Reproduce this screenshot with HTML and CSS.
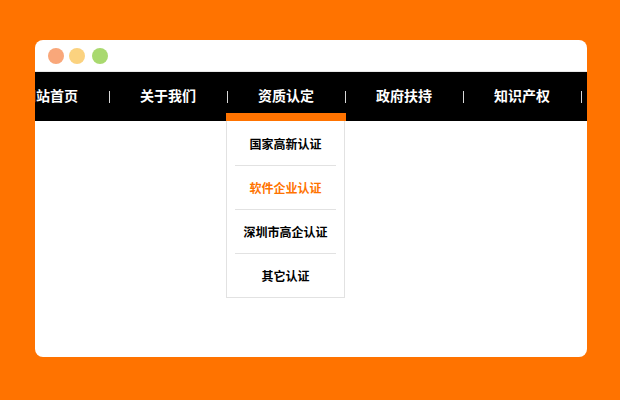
FILE: index.html
```html
<!DOCTYPE html>
<html lang="zh-CN">
<head>
  <meta charset="UTF-8" />
  <meta name="viewport" content="width=device-width, initial-scale=1.0"/>
  <title>导航菜单</title>
  <link rel="stylesheet" href="styles.css">
</head>
<body>
  <div class="window">
    <div class="titlebar">
      <span class="dot dot-red"></span>
      <span class="dot dot-yellow"></span>
      <span class="dot dot-green"></span>
    </div>

    <ul class="nav">
      <li class="nav-item"><a href="#">网站首页</a></li>
      <li class="nav-item"><a href="#">关于我们</a></li>
      <li class="nav-item active">
        <a href="#">资质认定</a>
        <ul class="submenu">
          <li><a href="#">国家高新认证</a></li>
          <li class="current"><a href="#">软件企业认证</a></li>
          <li><a href="#">深圳市高企认证</a></li>
          <li><a href="#">其它认证</a></li>
        </ul>
      </li>
      <li class="nav-item"><a href="#">政府扶持</a></li>
      <li class="nav-item"><a href="#">知识产权</a></li>
    </ul>
  </div>
</body>
</html>
```

FILE: styles.css
```css
* {
  box-sizing: border-box;
}

body {
  margin: 0;
  height: 400px;
  padding: 40px 33px 43px 35px;
  background-color: #ff7300;
  font-family: "Noto Sans CJK SC", "Liberation Sans", sans-serif;
  overflow: hidden;
}

ul {
  list-style: none;
  margin: 0;
  padding: 0;
}

a {
  color: inherit;
  text-decoration: none;
}

.window {
  height: 317px;
  background-color: #fff;
  border-radius: 8px;
  overflow: hidden;
}

.titlebar {
  display: flex;
  align-items: center;
  height: 32px;
  padding-left: 13px;
  border-bottom: 1px solid #e8e8e8;
}

.dot {
  width: 16px;
  height: 16px;
  border-radius: 50%;
}

.dot-red {
  background-color: #f9a77a;
}

.dot-yellow {
  margin-left: 5px;
  background-color: #fbd27f;
}

.dot-green {
  margin-left: 7px;
  background-color: #a9d96f;
}

.nav {
  display: flex;
  width: 800px;
  height: 49px;
  margin-left: -44px;
  background-color: #000;
}

.nav-item {
  position: relative;
  flex: 0 0 118px;
  height: 49px;
  line-height: 47px;
  text-align: center;
  font-size: 14px;
  font-weight: 700;
  color: #fff;
}

.nav-item::after {
  content: "";
  position: absolute;
  right: -1px;
  top: 19px;
  width: 1px;
  height: 12px;
  background-color: #d8d8d8;
}

.submenu {
  position: absolute;
  top: 49px;
  left: -1px;
  width: 119px;
  padding: 1px 8px 0;
  background-color: #fff;
  border: 1px solid #e2e2e2;
  border-top: none;
  font-size: 12px;
  color: #000;
}

.submenu::before {
  content: "";
  position: absolute;
  top: -8px;
  left: -1px;
  width: 120px;
  height: 8px;
  background-color: #ff7300;
}

.submenu li {
  height: 44px;
  line-height: 44px;
  border-bottom: 1px solid #e2e2e2;
}

.submenu li:last-child {
  height: 43px;
  border-bottom: none;
}

.submenu .current {
  color: #ff7300;
}
```
